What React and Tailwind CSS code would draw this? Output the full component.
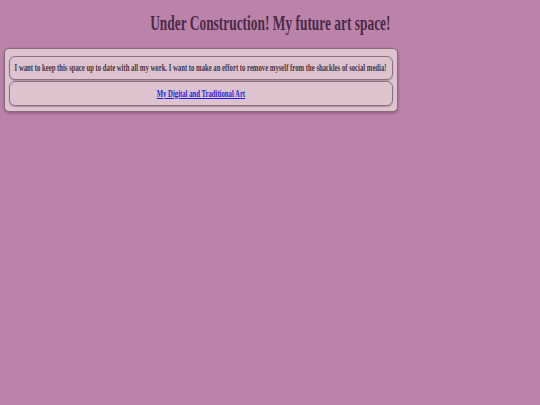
import React from 'react';

const serif = { fontFamily: '"Liberation Serif", "Times New Roman", serif' };

export default function App() {
  return (
    <div className="min-h-[405px] w-full bg-[#bc83aa]" style={serif}>
      {/* Heading */}
      <div className="flex justify-center pt-[12px] mb-[13px] h-[35px]">
        <h1 className="inline-block origin-center scale-x-[0.67] whitespace-nowrap text-[20px] leading-[23px] font-bold text-[#4b2a47]">
          Under Construction! My future art space!
        </h1>
      </div>

      {/* Card */}
      <div className="ml-[4px] w-[394px] h-[64px] rounded-[5px] border border-[#8a6a80] bg-[#dcc3cd] shadow-[0_1px_3px_rgba(70,30,60,0.45)] pt-[7px] px-[4px] flex flex-col gap-[1px]">
        <div className="h-[24px] w-[384px] rounded-[6px] border border-[#8b7081] flex items-center justify-center shadow-[0_1px_1px_rgba(70,30,60,0.3)]">
          <p className="inline-block shrink-0 origin-center scale-x-[0.67] whitespace-nowrap text-[10px] leading-[12px] font-bold text-[#4a3347]">
            I want to keep this space up to date with all my work. I want to make an effort to remove myself from the shackles of social media!
          </p>
        </div>
        <div className="h-[25px] w-[384px] rounded-[6px] border border-[#8b7081] flex items-center justify-center shadow-[0_1px_1px_rgba(70,30,60,0.3)]">
          <a href="#" className="inline-block shrink-0 origin-center scale-x-[0.67] whitespace-nowrap text-[10px] leading-[12px] font-bold text-[#1f1fe0] underline">
            My Digital and Traditional Art
          </a>
        </div>
      </div>
    </div>
  );
}
